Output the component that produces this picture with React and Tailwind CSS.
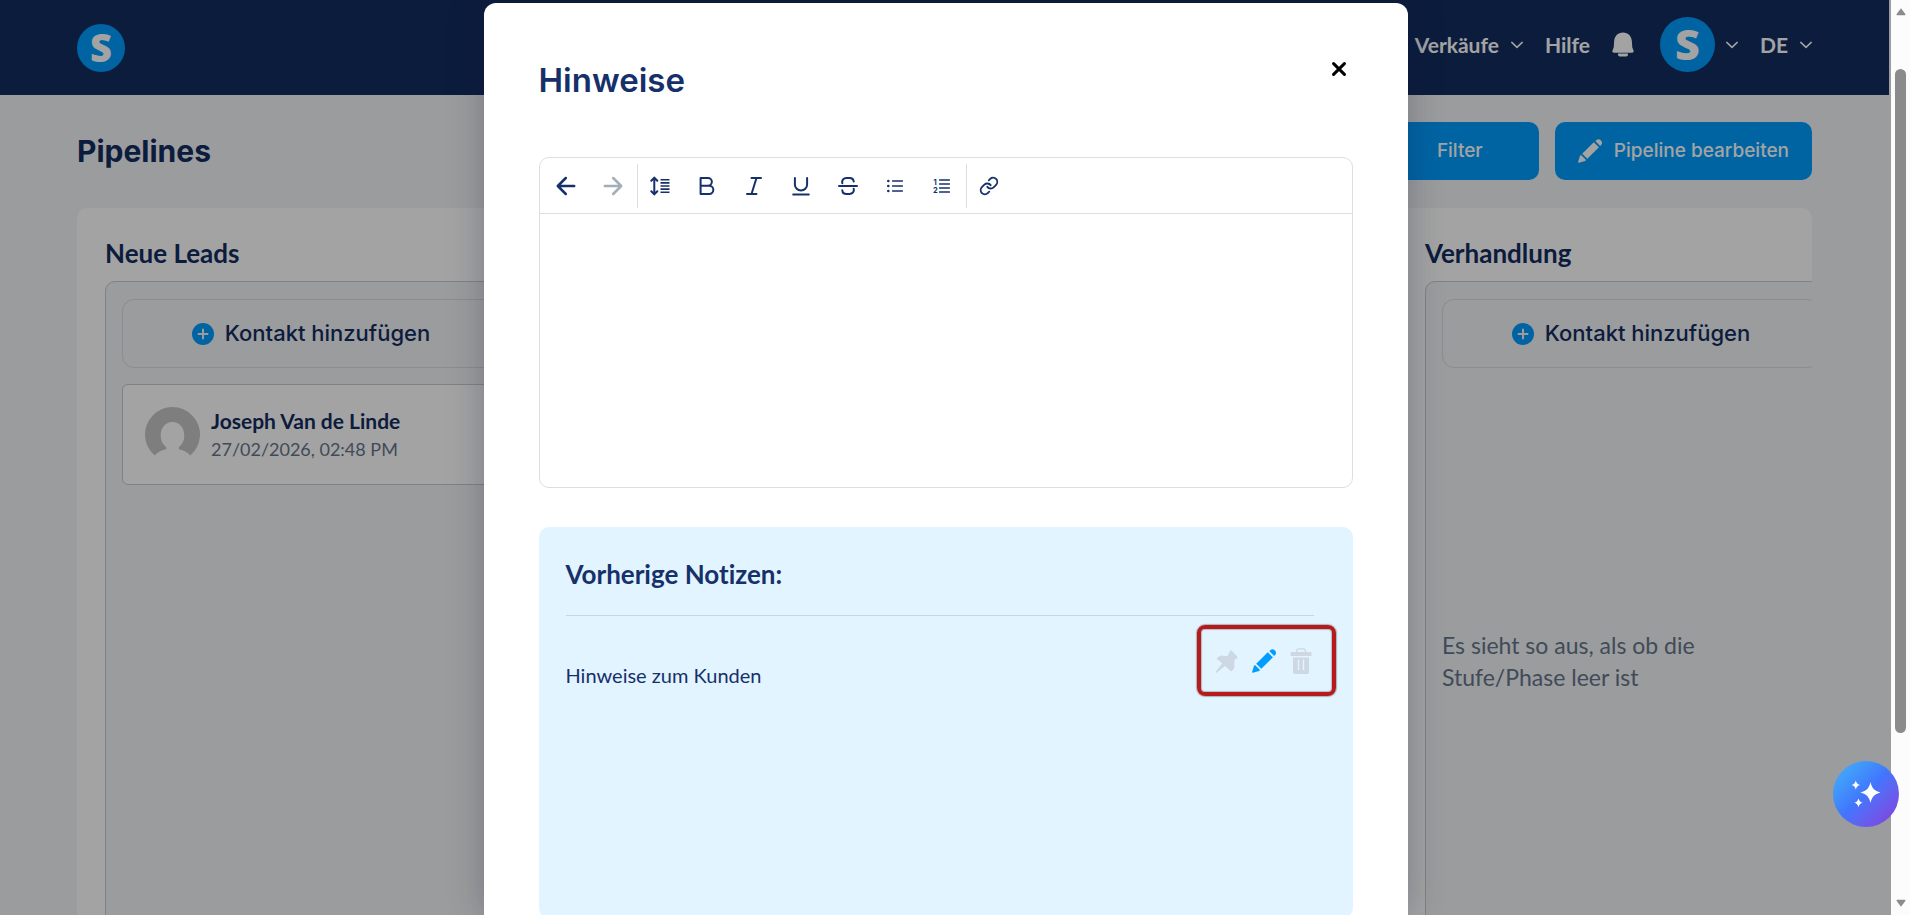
import { Link } from 'lucide-react';

const stroke = {
  fill: 'none',
  stroke: 'currentColor',
  strokeLinecap: 'round',
  strokeLinejoin: 'round',
};

function Chevron() {
  return (
    <svg viewBox="0 0 12 8" className="h-2 w-3" {...stroke} strokeWidth="1.5" aria-hidden="true">
      <path d="M.8 1.4 6 6.4l5.2-5" />
    </svg>
  );
}

function Logo({ className }) {
  return (
    <span
      className={`flex items-center justify-center rounded-full bg-[#009dff] font-['Open_Sans',sans-serif] font-extrabold text-white ${className}`}
    >
      S
    </span>
  );
}

function Bell() {
  return (
    <svg viewBox="0 0 22 25" className="h-[25px] w-[22px]" fill="currentColor" aria-hidden="true">
      <path d="M11 .4C5.700.4 2.300 4.200 2.100 9.500L1.700 15.500.5 18.300C0 19.800.6 20.700 2 20.700h18c1.400 0 2-.9 1.500-2.400l-1.200-2.800-.4-6C19.700 4.200 16.300.4 11 .4z" />
      <path d="M6 21.400h10v1.200c0 1.200-.6 1.800-1.800 1.800H7.800C6.600 24.400 6 23.800 6 22.600z" />
    </svg>
  );
}

function Pencil() {
  return (
    <svg viewBox="0 0 24 24" className="size-6" fill="currentColor" aria-hidden="true">
      <path d="M17.300 2 18.600.9c1.300-1.100 2.800-.9 3.900.2l.6.6c1.200 1.200 1.300 2.700.2 4L22.200 7z" />
      <path d="M15.800 3.200 20.900 8.300 9.300 19.800 4.200 14.700z" />
      <path d="M2 16.800 3 15.900 8.100 21 7.200 21.900.9 23.800c-.6.100-.9-.2-.8-.8z" />
    </svg>
  );
}

function Pin() {
  return (
    <svg viewBox="0 0 23 23" className="size-[23px]" fill="currentColor" aria-hidden="true">
      <path d="M15.300.6c.4-.4.800-.4 1.200 0l5.900 6.100c.4.400.4.900 0 1.200l-2.600 1.700c-.7 2-.7 4.700-.2 7.200-.5 2-1.800 3.700-3.600 4.700L10 15.900 1.300 22.900.4 22 7.300 13.200 1.600 8.800c1.300-1.900 3-3 5.200-3.300 2 .6 3.800.7 5.800.2z" />
    </svg>
  );
}

function Trash() {
  return (
    <svg viewBox="0 0 22 26" className="h-[26px] w-[22px]" fill="currentColor" aria-hidden="true">
      <path d="M6.500 4.500V3.200C6.500 1.800 7.500.9 8.800.9h4.400c1.300 0 2.300.9 2.300 2.300v1.300" fill="none" stroke="currentColor" strokeWidth="1.300" />
      <rect x=".5" y="4" width="21" height="4" rx=".7" />
      <path
        fillRule="evenodd"
        d="M3 9.400h16v14.800c0 1.100-.6 1.700-1.700 1.700H4.700c-1.100 0-1.700-.6-1.700-1.700zM7.800 11.500v10.400h1.400V11.500zM12.800 11.500v10.400h1.400V11.500z"
      />
    </svg>
  );
}

function ToolIcon({ width = 2, children }) {
  return (
    <svg viewBox="0 0 20 20" className="size-5" {...stroke} strokeWidth={width} aria-hidden="true">
      {children}
    </svg>
  );
}

function Tool({ label, disabled, children }) {
  return (
    <button
      type="button"
      aria-label={label}
      disabled={disabled}
      className="flex h-11 w-[47px] items-center justify-center text-[#16306a] disabled:text-[#a3aeb8]"
    >
      {children}
    </button>
  );
}

function Toolbar() {
  return (
    <div role="toolbar" className="flex h-14 items-center border-b border-[#dcdfe1] px-[3px]">
      <Tool label="Rückgängig">
        <ToolIcon width={2.5}>
          <path d="M18.200 10H2M9.800 2 1.800 10l8 8" />
        </ToolIcon>
      </Tool>
      <Tool label="Wiederholen" disabled>
        <ToolIcon width={2.5}>
          <path d="M1.800 10H18M10.200 2l8 8-8 8" />
        </ToolIcon>
      </Tool>
      <div className="-mr-px h-11 border-l border-[#dcdfe1]" />
      <Tool label="Zeilenhöhe">
        <ToolIcon>
          <path d="M4.300 2v16M1.300 4.800l3-3.200 3 3.200M1.300 15.200l3 3.200 3-3.200" />
          <path strokeWidth="1.600" strokeLinecap="butt" d="M10.500 3.800h9M10.500 6.900h9M10.500 10h9M10.500 13.100h9M10.500 16.200h9" />
        </ToolIcon>
      </Tool>
      <Tool label="Fett">
        <ToolIcon>
          <path d="M3.600 2H11a3.800 3.800 0 0 1 0 7.700H3.600zM3.600 9.700h8.600a4.100 4.100 0 0 1 0 8.300H3.600z" />
        </ToolIcon>
      </Tool>
      <Tool label="Kursiv">
        <ToolIcon>
          <path d="M7.500 2H17M3 18h9.500M12.500 2 7.500 18" />
        </ToolIcon>
      </Tool>
      <Tool label="Unterstrichen">
        <ToolIcon>
          <path d="M3.900 2v6.500a6.100 6.100 0 0 0 12.200 0V2M2.200 18.400h15.600" />
        </ToolIcon>
      </Tool>
      <Tool label="Durchgestrichen">
        <ToolIcon>
          <path d="M1 10.100h18M4.300 7.200C3.600 4.200 5.600 2 8.500 2h3c2.300 0 4 1.200 4.200 3.500M4.300 14.300C4.500 16.700 6.200 18 8.500 18h3c3 0 5-2.300 4.200-5.200" />
        </ToolIcon>
      </Tool>
      <Tool label="Aufzählung">
        <ToolIcon width={1.3}>
          <path strokeWidth="2.600" d="M3.300 5h.01M3.300 10h.01M3.300 15h.01" />
          <path d="M7.500 5h10M7.500 10h10M7.500 15h10" />
        </ToolIcon>
      </Tool>
      <Tool label="Nummerierte Liste">
        <ToolIcon width={1.3}>
          <path d="M7.500 4h10M7.500 8h10M7.500 12h10M7.500 16h10" />
          <g fill="currentColor" stroke="none" fontFamily="Inter, sans-serif" fontSize="7.500" fontWeight="700">
            <text x="1.500" y="8.500">1</text>
            <text x="1" y="17">2</text>
          </g>
        </ToolIcon>
      </Tool>
      <div className="-mr-px h-11 border-l border-[#dcdfe1]" />
      <Tool label="Link">
        <Link className="size-5" strokeWidth={2.2} />
      </Tool>
    </div>
  );
}

function Column({ title, children }) {
  return (
    <section className="flex w-[412px] shrink-0 flex-col">
      <h2 className="h-[46px] text-[26px] leading-9 font-bold">{title}</h2>
      <div className="flex min-h-[673px] flex-1 flex-col gap-4 rounded-[10px] border border-[#c8cbd0] bg-[#f2f4f6] p-4 pt-[17px]">
        <button
          type="button"
          className="flex h-[69px] items-center justify-center gap-[11px] rounded-xl border border-[#d9dce1] font-['Inter',sans-serif] text-[22px] font-medium"
        >
          <svg viewBox="0 0 22 22" className="size-[22px]" aria-hidden="true">
            <circle cx="11" cy="11" r="11" fill="#009dff" />
            <path d="M11 6.500v9M6.500 11h9" stroke="#f2f4f6" strokeWidth="2" strokeLinecap="round" />
          </svg>
          Kontakt hinzufügen
        </button>
        {children}
      </div>
    </section>
  );
}

function NavLink({ children, menu }) {
  return (
    <a href="#" className="flex items-center gap-3">
      {children}
      {menu && <Chevron />}
    </a>
  );
}

function Board() {
  return (
    <div className="text-[#132c5f]">
      <header className="mr-[2px] flex h-[95px] items-center justify-between bg-[#132c5f] px-[77px] text-[21px] font-bold text-white">
        <a href="#" aria-label="Startseite">
          <Logo className="size-12 text-[38px]" />
        </a>
        <nav className="flex items-center gap-[22px] pb-[6px]">
          <NavLink menu>Verkäufe</NavLink>
          <NavLink>Hilfe</NavLink>
          <button type="button" aria-label="Benachrichtigungen">
            <Bell />
          </button>
          <button type="button" aria-label="Konto" className="ml-1 flex items-center gap-[11px]">
            <Logo className="size-[55px] text-[43px]" />
            <Chevron />
          </button>
          <button type="button" className="flex items-center gap-3">
            DE
            <Chevron />
          </button>
        </nav>
      </header>

      <main className="mr-[2px] px-[77px] pt-[27px]">
        <div className="flex items-center justify-between">
          <h1 className="font-['Inter',sans-serif] text-[30px] leading-10 font-bold">Pipelines</h1>
          <div className="flex gap-4 font-['Inter',sans-serif] text-[19px] font-medium text-white">
            <button type="button" className="h-[58px] w-[158px] rounded-[10px] bg-[#009dff]">
              Filter
            </button>
            <button type="button" className="flex h-[58px] items-center gap-3 rounded-[10px] bg-[#009dff] px-[23px]">
              <Pencil />
              Pipeline bearbeiten
            </button>
          </div>
        </div>

        <div className="mt-7 flex gap-7 overflow-hidden rounded-[10px] bg-white p-7 pt-[27px]">
          <Column title="Neue Leads">
            <article className="flex h-[101px] items-center gap-[11px] rounded-md border border-[#c8cbd0] bg-white px-[22px]">
              <svg viewBox="0 0 55 55" className="size-[55px]" aria-hidden="true">
                <path
                  fill="#c5c5c5"
                  d="M9.700 48.500A27.500 27.500 0 1 1 45.300 48.500C43 45.500 39 43.300 34.500 42.500c-1-.4-1-1.900-.2-2.700C37.500 37 39.300 33.500 39.300 28.500 39.300 20.500 34.500 15 27.500 15S15.700 20.500 15.700 28.500c0 5 1.800 8.500 5 11.300.8.800.8 2.300-.2 2.700C16 43.300 12 45.500 9.700 48.500z"
                />
              </svg>
              <div className="leading-7">
                <h3 className="text-[21px] font-bold">Joseph Van de Linde</h3>
                <p className="text-[18px] text-[#66758c]">27/02/2026, 02:48 PM</p>
              </div>
            </article>
          </Column>
          <Column />
          <Column />
          <Column title="Verhandlung">
            <p className="flex flex-1 items-center text-[23px] leading-8 text-[#66758c]">
              <span className="max-w-[300px]">Es sieht so aus, als ob die Stufe/Phase leer ist</span>
            </p>
          </Column>
        </div>
      </main>
    </div>
  );
}

function NotesDialog() {
  return (
    <div
      role="dialog"
      aria-labelledby="notes-title"
      className="w-full max-w-[924px] rounded-t-xl bg-white px-[55px] pt-[52px] text-[#16306a] shadow-[0_0_36px_rgba(19,30,60,0.28)]"
    >
      <div className="flex items-start justify-between">
        <h2 id="notes-title" className="pt-[5px] font-['Inter',sans-serif] text-[33px] leading-10 font-semibold">
          Hinweise
        </h2>
        <button type="button" aria-label="Schließen" className="flex size-7 items-center justify-center text-black">
          <svg viewBox="0 0 14 14" className="size-[14px]" {...stroke} strokeWidth="3" aria-hidden="true">
            <path d="M1.600 1.600l10.800 10.800M12.400 1.600 1.600 12.400" />
          </svg>
        </button>
      </div>

      <div className="mt-[57px] overflow-hidden rounded-[10px] border border-[#dcdfe1]">
        <Toolbar />
        <textarea aria-label="Hinweis" className="block h-[273px] w-full resize-none p-4 text-[20px] outline-none" />
      </div>

      <section className="mt-[39px] min-h-[391px] rounded-[10px] bg-[#e2f4ff] pr-[39px] pl-[27px]">
        <h3 className="border-b border-[#c5d7e4] pt-[31px] pb-[25px] text-[26px] leading-8 font-bold">
          Vorherige Notizen:
        </h3>
        <div className="flex items-start justify-between pt-8">
          <p className="pt-[15px] text-[20px] leading-6">Hinweise zum Kunden</p>
          <div className="relative mr-[2px] flex items-center gap-[14px] text-[#cdd8e3]">
            <button type="button" aria-label="Anheften">
              <Pin />
            </button>
            <button type="button" aria-label="Bearbeiten" className="text-[#009dff]">
              <Pencil />
            </button>
            <button type="button" aria-label="Löschen">
              <Trash />
            </button>
            <span className="pointer-events-none absolute -top-[23px] -right-6 -bottom-[22px] -left-[18px] rounded-lg border-4 border-[#b71a1c] shadow-[0_0_1px_1px_rgba(60,60,60,0.35),inset_0_0_1px_1px_rgba(60,60,60,0.3)]" />
          </div>
        </div>
      </section>
    </div>
  );
}

function Scrollbar() {
  return (
    <div aria-hidden="true" className="flex w-[19px] shrink-0 flex-col items-center bg-[#fcfcfc] py-2">
      <svg viewBox="0 0 10 8" className="h-2 w-[10px]" fill="#8b8b8b">
        <path d="M5 .3 9.300 6c.4.700.1 1.300-.7 1.300H1.400C.6 7.300.3 6.700.7 6z" />
      </svg>
      <div className="mt-[53px] flex min-h-0 w-full flex-1 justify-center">
        <div className="h-4/5 w-[11px] rounded-full bg-[#8b8b8b]" />
      </div>
      <svg viewBox="0 0 10 8" className="h-2 w-[10px]" fill="#8b8b8b">
        <path d="M5 7.700 9.300 2C9.700 1.300 9.400.7 8.600.7H1.400C.6.7.3 1.300.7 2z" />
      </svg>
    </div>
  );
}

export default function App() {
  return (
    <div className="relative flex h-screen overflow-hidden font-['Lato',sans-serif] [font-variant-ligatures:none]">
      <div className="relative min-w-0 flex-1 overflow-hidden bg-[#f2f4f6]">
        <Board />
        <div className="absolute inset-0 flex justify-center overflow-hidden bg-black/36 pt-[3px]">
          <NotesDialog />
        </div>
      </div>
      <Scrollbar />
      <button
        type="button"
        aria-label="KI-Assistent"
        className="absolute right-[11px] bottom-[88px] flex size-[66px] items-center justify-center rounded-full bg-linear-135 from-[#43b0fa] from-5% via-[#4274fc] via-50% to-[#7f3fdc] to-95% text-white"
      >
        <svg viewBox="0 0 30 28" className="h-7 w-[30px]" fill="currentColor" aria-hidden="true">
          <path d="M19.500 2C20.900 8.200 23.200 10.900 29.500 12.500 23.200 14.100 20.900 16.900 19.500 23 18.100 16.900 15.800 14.100 9.500 12.500 15.800 10.900 18.100 8.200 19.500 2z" />
          <path d="M4.800.5C5.500 3.300 6.500 4.400 9.200 5 6.500 5.600 5.500 6.700 4.800 9.500 4.100 6.700 3.100 5.600.4 5 3.100 4.400 4.100 3.300 4.800.5zM7.500 18.300C8.200 21.100 9.200 22.200 11.900 22.800 9.200 23.400 8.200 24.500 7.500 27.300 6.800 24.500 5.800 23.400 3.100 22.800 5.800 22.200 6.800 21.100 7.500 18.300z" />
        </svg>
      </button>
    </div>
  );
}
